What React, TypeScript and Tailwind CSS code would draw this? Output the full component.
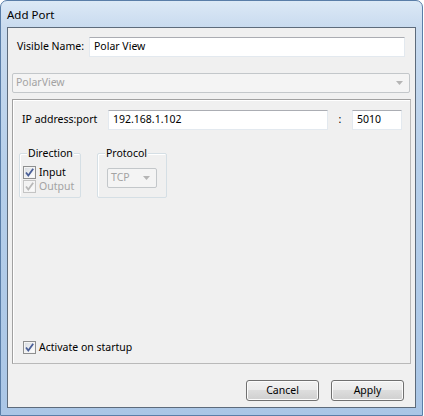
import { ReactNode } from 'react';

// Vista-style checkbox, 13x13
function CheckBox({ checked, disabled }: { checked?: boolean; disabled?: boolean }) {
    const border = disabled ? '#c4c4c4' : '#8e8f8f';
    const mark = disabled ? '#b8b8b8' : '#4a5f97';
    return (
        <svg width="13" height="13" viewBox="0 0 13 13" className="shrink-0">
            <defs>
                <linearGradient id={disabled ? 'cbd' : 'cbn'} x1="0" y1="0" x2="1" y2="1">
                    <stop offset="0" stopColor={disabled ? '#f0f0f0' : '#d9dde2'} />
                    <stop offset="1" stopColor={disabled ? '#fafafa' : '#ffffff'} />
                </linearGradient>
            </defs>
            <rect x="0.5" y="0.5" width="12" height="12" fill="#f4f4f4" stroke={border} />
            <rect x="2" y="2" width="9" height="9" fill={`url(#${disabled ? 'cbd' : 'cbn'})`} />
            {checked && (
                <path d="M3 6.5 L5.3 9.5 L10.2 2.8" fill="none" stroke={mark} strokeWidth="1.8" />
            )}
        </svg>
    );
}

function TextBox({ value, className }: { value: string; className: string }) {
    return (
        <div
            className={`h-5 bg-white border border-[#e3e9ef] border-t-[#abadb3] flex items-center px-[4px] text-black ${className}`}
        >
            {value}
        </div>
    );
}

function DisabledCombo({ value, className }: { value: string; className: string }) {
    return (
        <div
            className={`h-5 bg-[#f4f4f4] border border-[#c3c7ca] rounded-[2px] flex items-center justify-between pl-[3px] pr-[6px] text-[#a3a3a3] ${className}`}
        >
            <span>{value}</span>
            <svg width="7" height="4" viewBox="0 0 7 4">
                <path d="M0 0 H7 L3.5 4 Z" fill="#b5b5b5" />
            </svg>
        </div>
    );
}

function GroupBox({ title, className, children }: { title: string; className: string; children: ReactNode }) {
    return (
        <div className={`relative border border-[#d5dfe5] rounded-[2px] shadow-[inset_1px_1px_0_#ffffff] ${className}`}>
            <span className="absolute left-[7px] top-[-9px] px-[1px] bg-[#f0f0f0] leading-[16px]">{title}</span>
            {children}
        </div>
    );
}

function Button({ label }: { label: string }) {
    return (
        <div className="w-[73px] h-[21px] rounded-[3px] border border-[#707070] bg-[linear-gradient(#f2f2f2_0%,#ebebeb_48%,#dddddd_50%,#cfcfcf_100%)] shadow-[inset_0_0_0_1px_#fcfcfc] flex items-center justify-center text-black">
            {label}
        </div>
    );
}

export default function App() {
    return (
        <div className="w-[424px] h-[416px] bg-white font-['Noto_Sans',sans-serif] text-[10.5px] text-black">
            <div className="w-[423px] h-[416px] rounded-t-[7px] border border-[#5a7ea8] bg-[linear-gradient(180deg,#dce9f6_0px,#c9dbef_26px,#b6cfea_40%,#aac6e6_100%)] flex flex-col">
                {/* title bar */}
                <div className="h-[26px] shrink-0 flex items-center pl-[6px] text-[11.5px] pt-[1px]">Add Port</div>
                {/* client area */}
                <div className="mx-[6px] mb-[7px] flex-1 border border-[#5d6b7b] bg-[#f0f0f0] flex flex-col">
                    <div className="flex items-center pt-[9px] pl-[9px] pr-[10px]">
                        <span className="w-[72px]">Visible Name:</span>
                        <TextBox value="Polar View" className="flex-1" />
                    </div>
                    <DisabledCombo value="PolarView" className="mt-[16px] ml-[4px] mr-[5px]" />
                    <div className="mt-[6px] ml-[4px] mr-[4px] h-[265px] border border-[#a0a0a0] border-r-[#b9b9b9] border-b-[#b9b9b9] shadow-[inset_1px_1px_0_#ffffff] flex flex-col">
                        <div className="flex items-center mt-[10px] pl-[9px]">
                            <span className="w-[86px]">IP address:port</span>
                            <TextBox value="192.168.1.102" className="w-[220px]" />
                            <span className="w-[24px] text-center">:</span>
                            <TextBox value="5010" className="w-[50px]" />
                        </div>
                        <div className="flex mt-[23px] pl-[6px] gap-[16px]">
                            <GroupBox title="Direction" className="w-[62px] h-[45px] pl-[3px] pt-[12px] flex flex-col gap-[1px]">
                                <div className="flex items-center gap-[3px] leading-[13px]">
                                    <CheckBox checked />
                                    <span>Input</span>
                                </div>
                                <div className="flex items-center gap-[3px] leading-[13px] text-[#a3a3a3]">
                                    <CheckBox checked disabled />
                                    <span>Output</span>
                                </div>
                            </GroupBox>
                            <GroupBox title="Protocol" className="w-[70px] h-[45px] pl-[9px] pt-[14px]">
                                <DisabledCombo value="TCP" className="w-[50px]" />
                            </GroupBox>
                        </div>
                        <div className="flex-1" />
                        <div className="flex items-center gap-[3px] pl-[10px] mb-[9px] leading-[13px]">
                            <CheckBox checked />
                            <span>Activate on startup</span>
                        </div>
                    </div>
                    <div className="flex-1" />
                    <div className="flex justify-end gap-[12px] pr-[11px] mb-[6px]">
                        <Button label="Cancel" />
                        <Button label="Apply" />
                    </div>
                </div>
            </div>
        </div>
    );
}
